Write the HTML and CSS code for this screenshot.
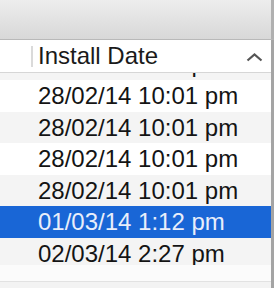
FILE: index.html
```html
<!DOCTYPE html>
<html lang="en">
<head>
   <meta charset="utf-8"/>
   <meta name="viewport" content="width=device-width, initial-scale=1" />
   <link rel="stylesheet" href="styles.css">
</head>
<body>
<!-- window toolbar -->
<div class="toolbar"></div>

<div class="table">
   <div class="main">
      <!-- column header -->
      <div class="colhead">
         <div class="col-blank"></div>
         <div class="col-sep"></div>
         <div class="col-title">Install Date</div>
         <svg class="sort" width="17" height="9" viewBox="0 0 17 9">
            <polyline points="1.5,7.5 8.5,1.5 15.5,7.5" fill="none" stroke="#555" stroke-width="2.2"/>
         </svg>
      </div>

      <!-- rows, scrolled a little -->
      <div class="rows">
         <div class="rows-inner">
            <div class="row odd">28/02/14 9:14 pm</div>
            <div class="row">28/02/14 10:01 pm</div>
            <div class="row odd">28/02/14 10:01 pm</div>
            <div class="row">28/02/14 10:01 pm</div>
            <div class="row odd">28/02/14 10:01 pm</div>
            <div class="row selected">01/03/14 1:12 pm</div>
            <div class="row odd">02/03/14 2:27 pm</div>
         </div>
      </div>

      <!-- bottom bar -->
      <div class="footer"></div>
      <div class="footer-low"></div>
   </div>
   <div class="edge"></div>
</div>
</body>
</html>
```

FILE: styles.css
```css
/* page */
body {
   margin: 0;
   width: 274px;
   height: 288px;
   overflow: hidden;
   background: #ffffff;
   font-family: "Liberation Sans", Arial, sans-serif;
}

/* grey title bar */
.toolbar {
   height: 39px;
   background: linear-gradient(#ededed, #d8d8d8);
   border-bottom: 1px solid #b9b9b9;
   border-right: 3px solid #b0b0b0;
   width: 271px;
}

.table {
   display: flex;
}

.main {
   width: 271px;
}

.edge {
   width: 3px;
   background: #a4a4a4;
}

/* column header */
.colhead {
   height: 32px;
   border-bottom: 1px solid #d6d6d6;
   display: flex;
   align-items: center;
   color: #1a1a1a;
   font-size: 24px;
}

.col-blank {
   width: 31px;
}

.col-sep {
   width: 2px;
   height: 21px;
   margin-top: 1px;
   background: #dadada;
}

.col-title {
   flex: 1;
   padding-left: 5px;
}

.sort {
   margin-right: 8px;
   margin-top: 2px;
}

/* table body */
.rows {
   height: 192px;
   overflow: hidden;
}

.rows-inner {
   margin-top: -24.6px;
}

.row {
   height: 31.6px;
   line-height: 31.6px;
   padding-left: 38px;
   font-size: 24px;
   color: #141414;
   background: #ffffff;
   white-space: nowrap;
}

.row.odd {
   background: #f4f4f4;
}

.row.selected {
   background: #1966d6;
   color: #e8eefb;
}

/* bottom bar */
.footer {
   height: 16px;
   background: #fbfbfb;
   border-bottom: 1px solid #e2e2e2;
}

.footer-low {
   height: 10px;
   background: #f3f3f3;
}
```
